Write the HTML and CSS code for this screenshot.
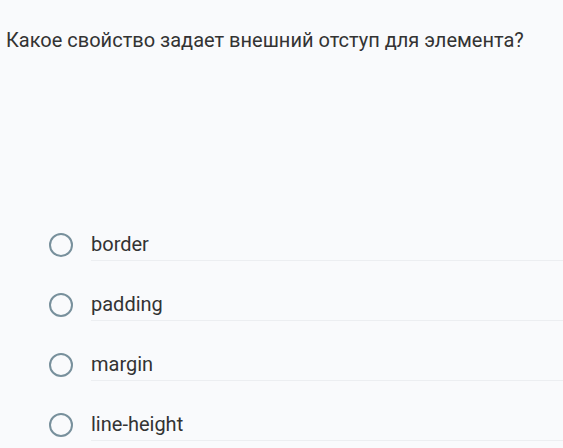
FILE: index.html
```html
<!DOCTYPE html>
<html lang="ru">
<head>
<meta charset="utf-8">
<link rel="stylesheet" href="styles.css">
</head>
<body>
<div class="quiz">
  <div class="question">Какое свойство задает внешний отступ для элемента?</div>
  <ul class="options">
    <li class="option"><span class="radio"></span><span class="label">border</span></li>
    <li class="option"><span class="radio"></span><span class="label">padding</span></li>
    <li class="option"><span class="radio"></span><span class="label">margin</span></li>
    <li class="option"><span class="radio"></span><span class="label">line-height</span></li>
  </ul>
</div>
</body>
</html>
```

FILE: styles.css
```css
html, body {
  margin: 0;
  padding: 0;
  background: #f9fafc;
}
body {
  font-family: Roboto, "Noto Sans", sans-serif;
  color: #333333;
  width: 563px;
  height: 448px;
  overflow: hidden;
}
.quiz {
  padding: 28px 0 0 6px;
}
.question {
  font-size: 20px;
  line-height: 24px;
}
.options {
  list-style: none;
  margin: 180px 0 0 0;
  padding: 0 0 0 43px;
  display: flex;
  flex-direction: column;
  gap: 31px;
}
.option {
  display: flex;
  align-items: flex-start;
  gap: 18px;
}
.radio {
  flex: none;
  width: 20px;
  height: 20px;
  border: 2px solid #78909c;
  border-radius: 50%;
  margin-top: 0.5px;
}
.label {
  flex: 1;
  font-size: 20px;
  line-height: 24px;
  padding-bottom: 4px;
  border-bottom: 1px solid #eceef1;
}
```
